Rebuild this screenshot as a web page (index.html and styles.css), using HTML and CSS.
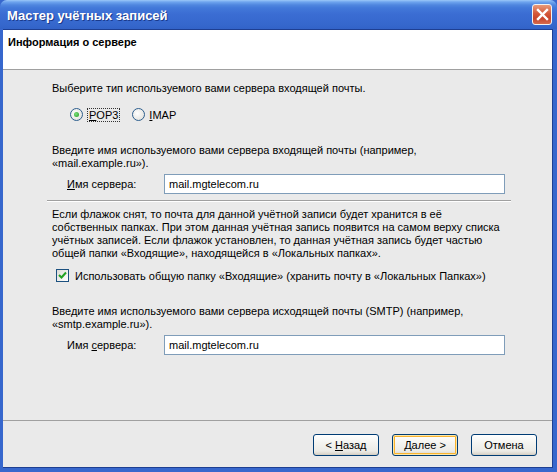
FILE: index.html
```html
<!DOCTYPE html>
<html lang="ru">
<head>
    <meta charset="UTF-8">
    <title>Мастер учётных записей</title>
    <link rel="stylesheet" href="styles.css">
</head>
<body>
    <div class="window">
        <div class="titlebar">
            <span class="title">Мастер учётных записей</span>
            <span class="close-btn">
                <svg width="13" height="13" viewBox="0 0 13 13">
                    <path d="M2 2 L11 11 M11 2 L2 11" stroke="#fff" stroke-width="2.4" stroke-linecap="square"/>
                </svg>
            </span>
        </div>
        <div class="frame">
            <div class="header">Информация о сервере</div>

            <div class="content">
                <p class="line">Выберите тип используемого вами сервера входящей почты.</p>

                <div class="radio-row">
                    <label class="radio checked"><span class="dot"></span><span class="focus"><u>P</u>OP3</span></label>
                    <label class="radio"><span class="dot"></span><span><u>I</u>MAP</span></label>
                </div>

                <p class="para gap-big">Введите имя используемого вами сервера входящей почты (например,<br>«mail.example.ru»).</p>

                <div class="field-row">
                    <span class="field-label"><u>И</u>мя сервера:</span>
                    <span class="field-input">mail.mgtelecom.ru</span>
                </div>

                <div class="divider"></div>

                <p class="para">Если флажок снят, то почта для данной учётной записи будет хранится в её<br>собственных папках. При этом данная учётная запись появится на самом верху списка<br>учётных записей. Если флажок установлен, то данная учётная запись будет частью<br>общей папки «Входящие», находящейся в «Локальных папках».</p>

                <label class="check-row">
                    <span class="check-box">
                        <svg width="9" height="9" viewBox="0 0 9 9">
                            <path d="M1 4 L3.5 6.5 L8 1.5" stroke="#21a121" stroke-width="2" fill="none"/>
                        </svg>
                    </span>
                    <span>Использовать общую папку «Входящие» (хранить почту в «Локальных Папках»)</span>
                </label>

                <p class="para gap-big">Введите имя используемого вами сервера исходящей почты (SMTP) (например,<br>«smtp.example.ru»).</p>

                <div class="field-row">
                    <span class="field-label">Имя <u>с</u>ервера:</span>
                    <span class="field-input">mail.mgtelecom.ru</span>
                </div>
            </div>

            <div class="footer">
                <span class="btn">&lt; <u>Н</u>азад</span>
                <span class="btn default"><u>Д</u>алее &gt;</span>
                <span class="btn">Отмена</span>
            </div>
        </div>
    </div>
</body>
</html>
```

FILE: styles.css
```css
body {
    margin: 0;
    font-family: "Liberation Sans", Arial, sans-serif;
    font-size: 11px;
    color: #000;
    background: #3767cd;
}
.window {
    width: 557px;
    height: 472px;
    display: flex;
    flex-direction: column;
    background: #3767cd;
}
.titlebar {
    height: 29px;
    display: flex;
    align-items: center;
    justify-content: space-between;
    padding: 0 7px 0 7px;
    border-radius: 7px 7px 0 0;
    background: linear-gradient(#9cc8f8 0, #6ea4ee 2px, #4f86df 5px, #4278d9 8px, #3b6dd3 14px, #3668cd 24px, #3263c8 29px);
}
.title {
    color: #fff;
    font-weight: bold;
    font-size: 13px;
    text-shadow: 1px 1px 0 #1a3a8c;
    margin-top: 1px;
}
.close-btn {
    width: 18px;
    height: 19px;
    margin-right: -2px;
    border: 1px solid #f2f2f2;
    border-radius: 3px;
    display: flex;
    align-items: center;
    justify-content: center;
    background: linear-gradient(#e89a7a, #d4583a 45%, #c8452c 70%, #d66a4c);
}
.frame {
    flex: 1;
    display: flex;
    flex-direction: column;
    margin: 0 4px 4px 3px;
    border-top: 1px solid #1e3f92;
    border-right: 1px solid #1e3f92;
    border-bottom: 1px solid #1e3f92;
    background: #eaeaea;
}
.header {
    height: 40px;
    padding: 6px 0 0 5px;
    box-sizing: border-box;
    background: #fff;
    font-weight: bold;
    border-bottom: 1px solid #a0a0a0;
}
.content {
    flex: 1;
    padding: 12px 0 0 49px;
    display: flex;
    flex-direction: column;
}
.line, .para {
    margin: 0;
    line-height: 13px;
}
.gap-big {
    margin-top: 23px;
}
.radio-row {
    display: flex;
    gap: 12px;
    height: 13px;
    margin: 13px 0 0 18px;
}
.radio {
    display: flex;
    align-items: center;
    gap: 4px;
}
.radio .dot {
    width: 11px;
    height: 11px;
    border: 1px solid #2d5e8e;
    border-radius: 50%;
    background: radial-gradient(circle at 40% 40%, #fff, #dcdcd6);
    display: flex;
    align-items: center;
    justify-content: center;
}
.radio.checked .dot::after {
    content: "";
    width: 5px;
    height: 5px;
    border-radius: 50%;
    background: radial-gradient(circle at 40% 40%, #7ee07e, #1f9a1f);
}
.focus {
    border: 1px dotted #333;
    padding: 0 1px;
    line-height: 12px;
}
.field-row {
    display: flex;
    align-items: center;
    margin-top: 4px;
}
.field-label {
    width: 97px;
    padding-left: 15px;
}
.field-input {
    width: 335px;
    height: 18px;
    line-height: 18px;
    padding-left: 4px;
    border: 1px solid #7f9db9;
    background: #fff;
}
.divider {
    height: 0;
    margin: 6px 0 6px -5px;
    width: 464px;
    border-top: 1px solid #a0a0a0;
    border-bottom: 1px solid #fff;
}
.check-row {
    display: flex;
    align-items: center;
    gap: 6px;
    height: 13px;
    margin: 9px 0 0 4px;
}
.check-box {
    width: 11px;
    height: 11px;
    border: 1px solid #1c5180;
    background: linear-gradient(135deg, #dcdcd7, #fff);
    display: flex;
    align-items: center;
    justify-content: center;
}
.footer {
    height: 47px;
    border-top: 1px solid #a0a0a0;
    display: flex;
    justify-content: flex-end;
    align-items: flex-start;
    gap: 13px;
    padding: 13px 15px 0 0;
    box-sizing: border-box;
}
.btn {
    display: inline-block;
    width: 64px;
    height: 20px;
    line-height: 20px;
    text-align: center;
    border: 1px solid #003c74;
    border-radius: 3px;
    background: linear-gradient(#ffffff, #f4f4f0 40%, #ecebe6 80%, #d6d0c5);
    box-shadow: inset 0 -1px 0 #d6d0c5;
}
.btn.default {
    box-shadow: inset 0 0 0 1px #fce7a9, inset 0 0 0 2px #f8b330;
}
```
